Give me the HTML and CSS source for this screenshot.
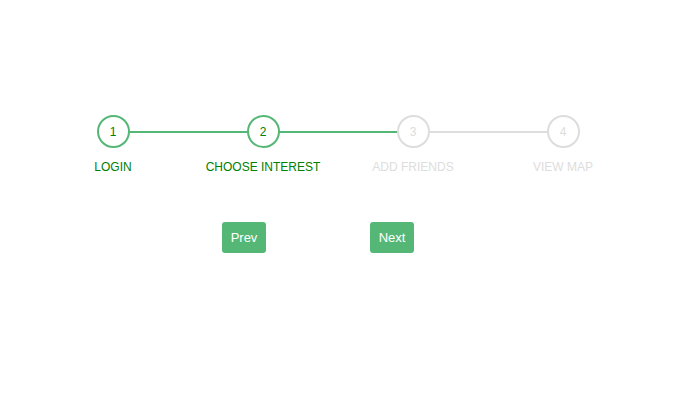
FILE: index.html
```html
<!DOCTYPE html>
<html>
<head>
<meta charset="utf-8">
<link rel="stylesheet" href="styles.css">
</head>
<body>
<div class="page">
  <ul class="steps">
    <li class="step done"><span class="circle">1</span><span class="label">LOGIN</span></li>
    <li class="step done"><span class="circle">2</span><span class="label">CHOOSE INTEREST</span></li>
    <li class="step active-line"><span class="circle">3</span><span class="label">ADD FRIENDS</span></li>
    <li class="step"><span class="circle">4</span><span class="label">VIEW MAP</span></li>
  </ul>
  <div class="buttons">
    <button class="btn">Prev</button>
    <button class="btn">Next</button>
  </div>
</div>
</body>
</html>
```
FILE: styles.css
```css
html, body {
  margin: 0;
  padding: 0;
  background: #fff;
  font-family: "Liberation Sans", Arial, sans-serif;
}
.page {
  padding-top: 115px;
}
.steps {
  list-style: none;
  margin: 0;
  padding: 0 0 0 38px;
  display: flex;
}
.step {
  position: relative;
  width: 150px;
  display: flex;
  flex-direction: column;
  align-items: center;
  color: #ddd;
  font-size: 12px;
}
.circle {
  position: relative;
  z-index: 1;
  box-sizing: border-box;
  width: 33px;
  height: 33px;
  border: 2px solid #ddd;
  border-radius: 50%;
  background: #fff;
  display: flex;
  align-items: center;
  justify-content: center;
  font-size: 12px;
}
.label {
  margin-top: 12px;
  line-height: 14px;
  white-space: nowrap;
}
.step::before {
  content: "";
  position: absolute;
  top: 15.5px;
  left: -75px;
  width: 150px;
  height: 2px;
  background: #ddd;
}
.step:first-child::before {
  display: none;
}
.step.done {
  color: green;
}
.step.done .circle {
  border-color: #55b776;
}
.step.done::before,
.step.active-line::before {
  background: #55b776;
}
.buttons {
  display: flex;
  padding-left: 222px;
  gap: 104px;
  margin-top: 48px;
}
.btn {
  width: 44px;
  height: 31px;
  padding: 0;
  border: none;
  border-radius: 3px;
  background: #55b776;
  color: #fff;
  font-family: "Liberation Sans", Arial, sans-serif;
  font-size: 13px;
}
```
